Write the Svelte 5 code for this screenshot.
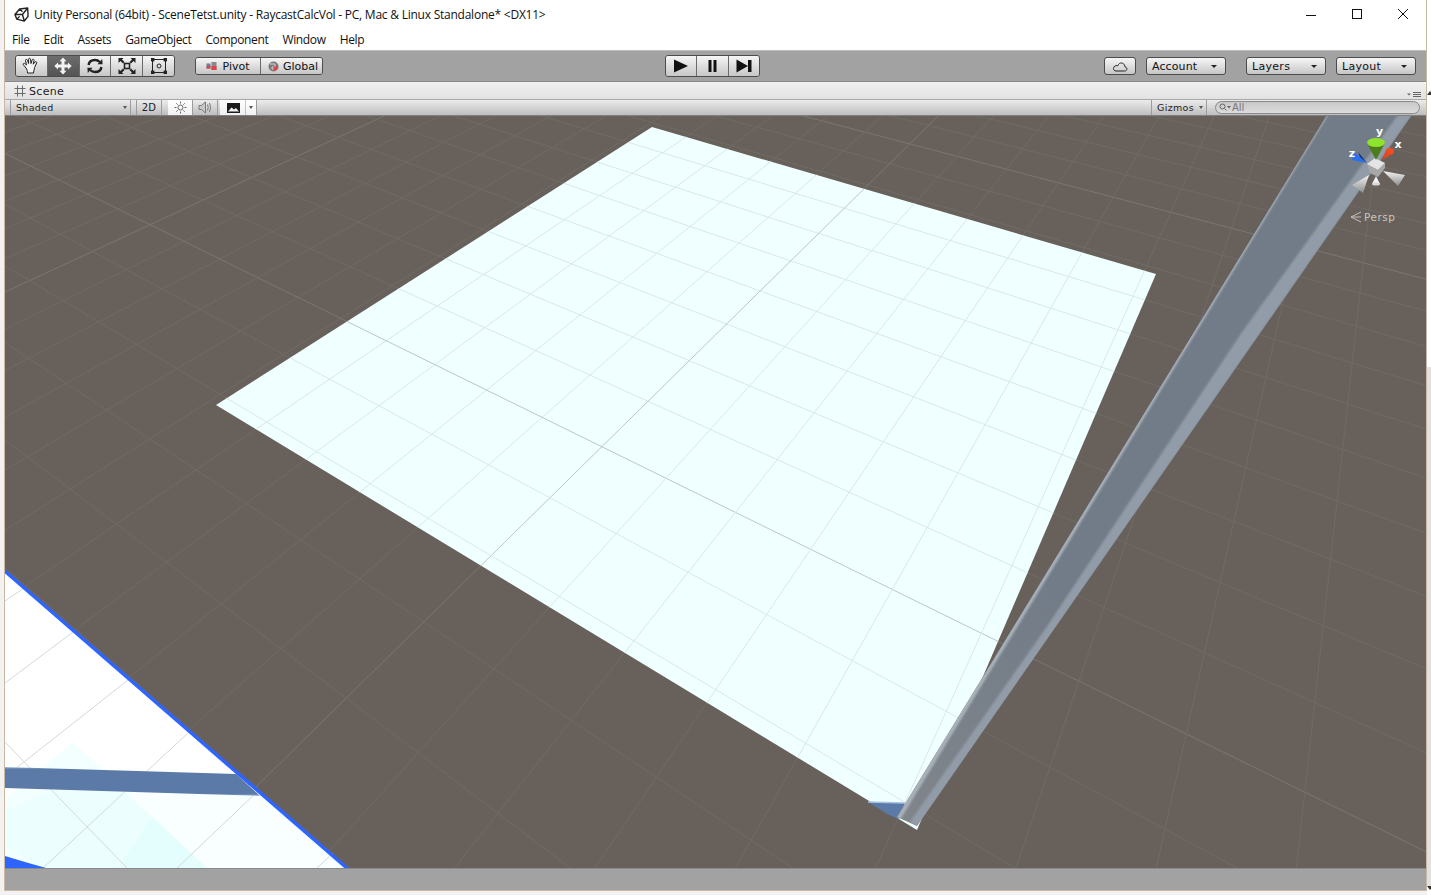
<script>
	// scene plane corners as seen on screen, everything else hangs off this projection
	const A = [652, 127];
	const B = [1156, 274];
	const C = [917, 830];
	const D = [216, 405];

	function det(a, b, c) {
		return (
			a[0] * (b[1] * c[2] - b[2] * c[1]) -
			b[0] * (a[1] * c[2] - a[2] * c[1]) +
			c[0] * (a[1] * b[2] - a[2] * b[1])
		);
	}

	const colB = [B[0], B[1], 1];
	const colD = [D[0], D[1], 1];
	const colC = [-C[0], -C[1], -1];
	const colA = [A[0], A[1], 1];
	const d0 = det(colB, colD, colC);
	const wB = det(colA, colD, colC) / d0;
	const wD = det(colB, colA, colC) / d0;

	function project(u, v) {
		const w = 1 + u * (wB - 1) + v * (wD - 1);
		const x = A[0] + u * (wB * B[0] - A[0]) + v * (wD * D[0] - A[0]);
		const y = A[1] + u * (wB * B[1] - A[1]) + v * (wD * D[1] - A[1]);
		return { x: x / w, y: y / w, w };
	}

	const edgeU = (x) => {
		const t = (x - A[0]) / (B[0] - A[0]);
		return t / (wB - (wB - 1) * t);
	};
	const edgeV = (x) => {
		const t = (A[0] - x) / (A[0] - D[0]);
		return t / (wD - (wD - 1) * t);
	};

	const uMajor = edgeU(864);
	const du = (edgeU(913) - edgeU(685)) / 5;
	const vMajor = edgeV(347);
	const dv = (edgeV(290) - edgeV(628)) / 8;

	function groundSegment(axis, value) {
		let first = null;
		let last = null;
		for (let t = -12; t <= 12; t += 0.02) {
			const p = axis == 'u' ? project(value, t) : project(t, value);
			if (p.w < 0.2) continue;
			if (!first) first = p;
			last = p;
		}
		return first ? { x1: first.x, y1: first.y, x2: last.x, y2: last.y } : null;
	}

	const ground = [];
	const plane = [];
	for (let k = -40; k <= 40; k++) {
		const major = k % 10 == 0;
		const u = uMajor + k * du;
		const v = vMajor + k * dv;
		const su = groundSegment('u', u);
		const sv = groundSegment('v', v);
		if (su) ground.push({ ...su, major });
		if (sv) ground.push({ ...sv, major });
		if (u > 0 && u < 1) {
			const a = project(u, 0);
			const b = project(u, 1);
			plane.push({ x1: a.x, y1: a.y, x2: b.x, y2: b.y, major });
		}
		if (v > 0 && v < 1) {
			const a = project(0, v);
			const b = project(1, v);
			plane.push({ x1: a.x, y1: a.y, x2: b.x, y2: b.y, major });
		}
	}

	const planePoints = [A, B, C, D].map((p) => p.join(',')).join(' ');

	// grid of the second plane in the lower left corner
	const cornerLines = [
		[5, 601, 24, 588],
		[5, 683, 73, 632],
		[128, 680, 5, 777],
		[188, 733, 43, 868],
		[257, 792, 177, 868],
		[333, 853, 317, 868],
		[5, 742, 127, 868]
	];

	const menus = ['File', 'Edit', 'Assets', 'GameObject', 'Component', 'Window', 'Help'];
	const dropdowns = ['Layers', 'Layout'];
</script>

<div class="desktop">
	<div class="window">
		<header class="titlebar">
			<svg class="unity" viewBox="0 0 16 16" width="15" height="15">
				<path d="M1 8 L6 2.2 L14.6 1 L15 10 L11 15 L3 13 Z M1 8 L9 8 M9 8 L14.6 1 M9 8 L11 15 M6 2.2 L9 5 M3 13 L6 10" fill="none" stroke="#222" stroke-width="1.5" stroke-linejoin="round" />
			</svg>
			<span class="title">Unity Personal (64bit) - SceneTetst.unity - RaycastCalcVol - PC, Mac &amp; Linux Standalone* &lt;DX11&gt;</span>
			<div class="winbtns">
				<svg width="12" height="12" viewBox="0 0 12 12"><path d="M1 7.500 H11" stroke="#111" fill="none" /></svg>
				<svg width="12" height="12" viewBox="0 0 12 12"><rect x="1.500" y="1.500" width="9" height="9" stroke="#111" fill="none" /></svg>
				<svg width="12" height="12" viewBox="0 0 12 12"><path d="M1 1 L11 11 M11 1 L1 11" stroke="#111" fill="none" /></svg>
			</div>
		</header>

		<nav class="menubar">
			{#each menus as menu}
				<span>{menu}</span>
			{/each}
		</nav>

		<div class="toolbar">
			<div class="group tools">
				<button class="tool" aria-label="Hand">
					<svg width="20" height="18" viewBox="0 0 20 18"><path d="M5 11 L2.500 8 C1.500 6.800 3 5.600 4.200 6.800 L5.500 8 L4.500 3.500 C4.300 2.200 6 2 6.400 3.200 L7.600 6.500 L7.600 2.200 C7.600 1 9.400 1 9.500 2.200 L10 6.500 L11.200 2.800 C11.600 1.700 13.200 2.200 13 3.400 L12.200 7.200 L14 5 C14.800 4.100 16.200 5 15.600 6 L13.600 10.500 C13 12.500 13 14 12.500 16 L6.500 16 C6.500 14 6 12.500 5 11 Z" fill="#f4f4f4" stroke="#222" stroke-width="1" stroke-linejoin="round" /></svg>
				</button>
				<button class="tool active" aria-label="Move">
					<svg width="20" height="18" viewBox="0 0 20 18"><path d="M10 0.500 L13.500 4.300 H11.500 V7.500 H15 V5.500 L18.700 9 L15 12.500 V10.500 H11.500 V13.700 H13.500 L10 17.500 L6.500 13.700 H8.500 V10.500 H5 V12.500 L1.300 9 L5 5.500 V7.500 H8.500 V4.300 H6.500 Z" fill="#f2f2f2" /></svg>
				</button>
				<button class="tool" aria-label="Rotate">
					<svg width="20" height="18" viewBox="0 0 20 18"><path d="M3.600 8 C4 4.500 7 3 10 3 C12 3 13.600 3.800 14.800 5" fill="none" stroke="#222" stroke-width="2.400" /><path d="M12.500 7.200 L17.600 7.200 L17.200 2 Z" fill="#222" /><path d="M16.400 10 C16 13.500 13 15 10 15 C8 15 6.400 14.200 5.200 13" fill="none" stroke="#222" stroke-width="2.400" /><path d="M7.500 10.800 L2.400 10.800 L2.800 16 Z" fill="#222" /></svg>
				</button>
				<button class="tool" aria-label="Scale">
					<svg width="20" height="18" viewBox="0 0 20 18"><rect x="7.500" y="6.500" width="5" height="5" fill="none" stroke="#222" stroke-width="1.600" /><path d="M1.500 1 H6.500 L5 2.500 L7.500 5 L6 6.500 L3.500 4 L1.500 6 Z M18.500 1 H13.500 L15 2.500 L12.500 5 L14 6.500 L16.500 4 L18.500 6 Z M1.500 17 H6.500 L5 15.500 L7.500 13 L6 11.500 L3.500 14 L1.500 12 Z M18.500 17 H13.500 L15 15.500 L12.500 13 L14 11.500 L16.500 14 L18.500 12 Z" fill="#222" /></svg>
				</button>
				<button class="tool" aria-label="Rect">
					<svg width="20" height="18" viewBox="0 0 20 18"><rect x="3.500" y="2.500" width="13" height="13" fill="none" stroke="#222" /><circle cx="10" cy="9" r="2" fill="none" stroke="#222" /><g fill="#222"><rect x="2" y="1" width="3.400" height="3.400" /><rect x="14.600" y="1" width="3.400" height="3.400" /><rect x="2" y="13.600" width="3.400" height="3.400" /><rect x="14.600" y="13.600" width="3.400" height="3.400" /></g></svg>
				</button>
			</div>

			<div class="group small pivot">
				<button class="pivot-btn">
					<svg width="12" height="10" viewBox="0 0 12 10"><rect x="0.500" y="2.500" width="4" height="5" fill="#6b7ea0" /><rect x="5.500" y="1" width="5" height="8" fill="#8a8a8a" /><rect x="5.500" y="5" width="5" height="4" fill="#d94848" /><rect x="0.500" y="5" width="4" height="2.500" fill="#d94848" /></svg>
					Pivot
				</button>
				<button class="global-btn">
					<svg width="11" height="11" viewBox="0 0 11 11"><circle cx="5.500" cy="5.500" r="5" fill="#7a7a7a" /><path d="M2 3 H7 V6 H4 V8 H8" fill="none" stroke="#d6d6d6" /><path d="M5.500 5.500 H10 A4.500 4.500 0 0 1 5.500 10 Z" fill="#d94848" /></svg>
					Global
				</button>
			</div>

			<div class="group play">
				<button aria-label="Play"><svg width="16" height="14" viewBox="0 0 16 14"><path d="M1 0.500 L15 7 L1 13.500 Z" fill="#111" /></svg></button>
				<button aria-label="Pause"><svg width="16" height="14" viewBox="0 0 16 14"><path d="M4.500 1 H7.500 V13 H4.500 Z M9.500 1 H12.500 V13 H9.500 Z" fill="#111" /></svg></button>
				<button aria-label="Step"><svg width="16" height="14" viewBox="0 0 16 14"><path d="M0.500 0.500 L12 7 L0.500 13.500 Z M12 1 H15.500 V13 H12 Z" fill="#111" /></svg></button>
			</div>

			<button class="flat cloud" aria-label="Cloud">
				<svg width="16" height="11" viewBox="0 0 16 11"><path d="M4 10 H12.500 C15.500 10 15.800 6.500 13 6 C13 3 10 1 7.500 2.500 C6.500 3.300 6 4 5.800 4.800 C3.500 4 1.500 5.500 1.500 7.500 C1.500 9 2.500 10 4 10 Z" fill="none" stroke="#222" /></svg>
			</button>
			<button class="flat drop account"><span>Account</span><i class="caret"></i></button>
			{#each dropdowns as label}
				<button class="flat drop {label.toLowerCase()}"><span>{label}</span><i class="caret"></i></button>
			{/each}
		</div>

		<div class="tabbar">
			<svg width="12" height="12" viewBox="0 0 12 12"><path d="M3.500 0.500 V11.500 M8.500 0.500 V11.500 M0.500 3.500 H11.500 M0.500 8.500 H11.500" stroke="#6a6a6a" fill="none" /></svg>
			<span class="tab-label">Scene</span>
			<svg class="panel-menu" width="15" height="6" viewBox="0 0 15 6"><path d="M0 1.500 H4 L2 3.500 Z" fill="#666" /><path d="M6 0.500 H14 M6 2.500 H14 M6 4.500 H14" stroke="#666" fill="none" /></svg>
		</div>

		<div class="scenebar">
			<div class="seg shaded"><span>Shaded</span><i class="mini"></i></div>
			<div class="seg two-d">2D</div>
			<div class="seg lit sun">
				<svg width="13" height="13" viewBox="0 0 13 13"><circle cx="6.500" cy="6.500" r="2.500" fill="none" stroke="#666" /><path d="M6.500 0.500 V2.500 M6.500 10.500 V12.500 M0.500 6.500 H2.500 M10.500 6.500 H12.500 M2.300 2.300 L3.700 3.700 M9.300 9.300 L10.700 10.700 M10.700 2.300 L9.300 3.700 M3.700 9.300 L2.300 10.700" stroke="#666" fill="none" /></svg>
			</div>
			<div class="seg audio">
				<svg width="15" height="13" viewBox="0 0 15 13"><path d="M1 4.500 H3.500 L7.500 1 V12 L3.500 8.500 H1 Z" fill="#c8c8c8" stroke="#7a7a7a" /><path d="M9.500 3.500 Q11 6.500 9.500 9.500 M11.500 2 Q13.800 6.500 11.500 11" fill="none" stroke="#7a7a7a" /></svg>
			</div>
			<div class="seg lit image">
				<svg width="13" height="10" viewBox="0 0 13 10"><rect width="13" height="10" fill="#1c1c1c" /><path d="M1 8.500 L4.500 4.500 L7 6.500 L9 5 L12 8.500 Z" fill="#f2f2f2" /></svg>
				<span class="image-drop"><i class="mini"></i></span>
			</div>
			<div class="seg gizmos"><span>Gizmos</span><i class="mini"></i></div>
			<div class="search">
				<svg width="13" height="9" viewBox="0 0 13 9"><circle cx="3.500" cy="3.500" r="2.500" fill="none" stroke="#666" /><path d="M5.500 5.500 L7.500 7.500" stroke="#666" /><path d="M8 3 H12 L10 5.500 Z" fill="#666" /></svg>
				<span>All</span>
			</div>
		</div>

		<div class="viewport">
			<svg class="scene" viewBox="5 116 1421 752" width="1421" height="752" role="img" aria-label="Scene view">
				<defs>
					<linearGradient id="coneGrey" x1="0" y1="0" x2="0" y2="1">
						<stop offset="0" stop-color="#f4f4f4" />
						<stop offset="1" stop-color="#8c8c8c" />
					</linearGradient>
					<linearGradient id="bandFade" x1="0" y1="0" x2="0" y2="1">
						<stop offset="0" stop-color="#a9c2de" />
						<stop offset="0.07" stop-color="#5b7aa8" />
						<stop offset="0.93" stop-color="#5b7aa8" />
						<stop offset="1" stop-color="#a9c2de" />
					</linearGradient>
					<linearGradient id="beamBody" gradientUnits="userSpaceOnUse" x1="1060" y1="590" x2="900" y2="820">
						<stop offset="0" stop-color="#727c88" />
						<stop offset="1" stop-color="#80858a" />
					</linearGradient>
					<filter id="soft" x="-5%" y="-5%" width="110%" height="110%">
						<feGaussianBlur stdDeviation="1.200" />
					</filter>
					<clipPath id="beamClip">
						<polygon points="1327,115 1412,115 917,826 897,817" />
					</clipPath>
				</defs>

				<rect x="5" y="116" width="1421" height="752" fill="#68615b" />

				{#each ground as l}
					<line x1={l.x1} y1={l.y1} x2={l.x2} y2={l.y2} stroke={l.major ? '#7a7671' : '#6f6b65'} stroke-width="1" />
				{/each}

				<polygon points={planePoints} fill="#f0ffff" />
				{#each plane as l}
					<line x1={l.x1} y1={l.y1} x2={l.x2} y2={l.y2} stroke={l.major ? '#bcc6c6' : '#dae7e7'} stroke-width="1" />
				{/each}
				<polygon points="868,802 905,803 899,819 889,815" fill="#5b7aa8" />
				<line x1="868" y1="802" x2="905" y2="803" stroke="#a8c4e0" stroke-width="1.500" />

				<!-- beam -->
				<polygon points="1327,115 1412,115 917,826 897,817" fill="url(#beamBody)" />
				<g clip-path="url(#beamClip)">
					<polygon points="1327,110 1331,110 900,820 896,818" fill="#aab2bc" filter="url(#soft)" />
					<polygon points="1414,112 1400,112 1240,335 1048,625 910,822 918,827" fill="#929ca9" filter="url(#soft)" />
				</g>

				<!-- second plane, lower left -->
				<polygon points="5,570 347,868 5,868" fill="#ffffff" />
				<polygon points="73,742 207,868 5,868 5,800" fill="#f3fffe" />
				<polygon points="260,792 347,868 207,868 120,786" fill="#f8fffe" />
				<polygon points="100,770 175,838 145,868 40,868 5,845 5,810" fill="#ecfefe" />
				<polygon points="152,817 207,868 118,868" fill="#e4fdfd" />
				{#each cornerLines as l}
					<line x1={l[0]} y1={l[1]} x2={l[2]} y2={l[3]} stroke="#d2d9d9" stroke-width="1" />
				{/each}
				<polygon points="5,767 236,774 260,796 5,788" fill="url(#bandFade)" />
				<polygon points="5,856 25,862 46,868 5,868" fill="#2e64ff" />
				<line x1="3" y1="569.500" x2="348" y2="869" stroke="#2e64ff" stroke-width="3.500" />

				<!-- orientation gizmo -->
				<polygon points="1369,175 1352,185 1363,193" fill="url(#coneGrey)" />
				<polygon points="1383,171 1405,175 1398,186" fill="url(#coneGrey)" />
				<polygon points="1376,176 1372,184 1380,184" fill="#f0f0f0" />
				<ellipse cx="1376" cy="184" rx="4" ry="1.500" fill="#d8d8d8" />
				<polygon points="1367,164 1378,170 1385,163 1385,168 1378,177 1370,173" fill="#a8a8a8" />
				<polygon points="1375,158 1385,163 1378,170 1367,164" fill="#e4e4e4" />
				<polygon points="1367,143 1385,143 1376,160" fill="#4c7d1a" />
				<ellipse cx="1376" cy="142.500" rx="9" ry="4.500" fill="#8fe32e" />
				<polygon points="1387,148 1394,153 1382,160" fill="#e8461e" />
				<ellipse cx="1390.500" cy="151" rx="3.500" ry="3" fill="#f04e22" />
				<polygon points="1354,152 1367,163 1352,160" fill="#2a6ff0" />
				<polygon points="1358,152 1367,163 1360,157" fill="#0e2a78" />
				<text class="axis" x="1379.500" y="135" text-anchor="middle">y</text>
				<text class="axis" x="1398" y="148" text-anchor="middle">x</text>
				<text class="axis" x="1352" y="157" text-anchor="middle">z</text>
				<path d="M1361 212 L1351 217 L1361 222 M1351 217 H1361" fill="none" stroke="#c4c0bb" />
				<text class="persp" x="1364" y="221">Persp</text>
			</svg>
		</div>

		<div class="status"></div>
	</div>

	<aside class="behind">
		<i class="arrow up"></i>
		<span class="thumb"></span>
		<i class="arrow down"></i>
	</aside>
</div>

<style>
	:global(body) {
		margin: 0;
		background: #f4f2f0;
		overflow: hidden;
	}

	.desktop {
		display: flex;
		height: 895px;
		padding-left: 4px;
		box-sizing: border-box;
	}

	.window {
		box-sizing: border-box;
		width: 1423px;
		height: 891px;
		flex: none;
		border-left: 1px solid #c9b8a4;
		border-right: 1px solid #c9b8a4;
		border-bottom: 1px solid #c9b8a4;
		display: flex;
		flex-direction: column;
		background: #fff;
		overflow: hidden;
		font-family: 'DejaVu Sans', sans-serif;
	}

	.behind {
		flex: 1;
		display: flex;
		flex-direction: column;
		padding-top: 91px;
		padding-bottom: 5px;
		background: #fff;
	}

	.thumb {
		flex: 1;
		margin-top: 272px;
		background: #e2e0de;
	}

	.arrow {
		width: 0;
		height: 0;
		align-self: center;
		border-left: 3px solid transparent;
		border-right: 3px solid transparent;
	}

	.up {
		border-bottom: 4px solid #333;
	}

	.down {
		border-top: 4px solid #333;
	}

	.titlebar {
		flex: 0 0 30px;
		box-sizing: border-box;
		display: flex;
		align-items: center;
		padding: 0 0 2px 9px;
		color: #111;
		font-family: 'Open Sans', sans-serif;
		font-size: 12px;
	}

	.unity {
		margin-right: 5px;
	}

	.title {
		letter-spacing: -0.235px;
	}

	.winbtns {
		margin-left: auto;
		display: flex;
		gap: 34px;
		padding-right: 17px;
	}

	.menubar {
		flex: 0 0 20px;
		box-sizing: border-box;
		display: flex;
		gap: 14px;
		padding: 0 0 2px 7px;
		align-items: center;
		font-family: 'Open Sans', sans-serif;
		font-size: 12px;
		letter-spacing: -0.35px;
		color: #111;
	}

	.toolbar {
		flex: 0 0 32px;
		box-sizing: border-box;
		display: flex;
		align-items: center;
		padding-left: 10px;
		background: #a2a2a2;
		border-top: 1px solid #bdbdbd;
		border-bottom: 1px solid #8a8a8a;
		font-size: 11px;
		color: #111;
	}

	button {
		margin: 0;
		padding: 0;
		font: inherit;
		color: inherit;
		background: linear-gradient(#f6f6f6, #c6c6c6);
		border: 0;
		display: flex;
		align-items: center;
		justify-content: center;
	}

	.group {
		display: flex;
		border: 1px solid #4c4c4c;
		border-radius: 3px;
		overflow: hidden;
		box-sizing: border-box;
	}

	.group button + button {
		border-left: 1px solid #6a6a6a;
	}

	.tools {
		height: 22px;
		width: 160px;
	}

	.tool {
		flex: 1;
	}

	.tool.active {
		background: linear-gradient(#6d6d6d, #545454);
	}

	.pivot {
		height: 18px;
		width: 128px;
		margin-left: 20px;
		letter-spacing: 0.5px;
	}

	.pivot-btn {
		width: 64px;
		gap: 4px;
	}

	.global-btn {
		flex: 1;
		gap: 4px;
		padding-left: 3px;
	}

	.play {
		height: 22px;
		width: 95px;
		margin-left: 342px;
	}

	.play button {
		flex: 1;
	}

	.flat {
		box-sizing: border-box;
		height: 18px;
		border: 1px solid #4c4c4c;
		border-radius: 3px;
	}

	.cloud {
		width: 32px;
		margin-left: 344px;
	}

	.drop {
		width: 80px;
		justify-content: space-between;
		padding: 0 8px 0 5px;
		letter-spacing: 0.3px;
	}

	.account {
		margin-left: 10px;
		letter-spacing: 0.1px;
	}

	.layers {
		margin-left: 20px;
	}

	.layout {
		margin-left: 10px;
	}

	.caret {
		width: 0;
		height: 0;
		border-left: 3px solid transparent;
		border-right: 3px solid transparent;
		border-top: 3px solid #222;
	}

	.tabbar {
		flex: 0 0 18px;
		box-sizing: border-box;
		display: flex;
		align-items: center;
		gap: 3px;
		padding: 1px 0 0 9px;
		background: linear-gradient(#f0f0f0, #e2e2e2);
		border-bottom: 1px solid #a8a8a8;
		border-top-right-radius: 3px;
		font-size: 11px;
		letter-spacing: 0.3px;
		color: #222;
	}

	.panel-menu {
		margin-left: auto;
		margin-top: 8px;
		margin-right: 4px;
	}

	.scenebar {
		flex: 0 0 16px;
		box-sizing: border-box;
		display: flex;
		align-items: stretch;
		background: linear-gradient(#ececec, #bebebe);
		border-bottom: 1px solid #808080;
		font-size: 9.500px;
		letter-spacing: 0.3px;
		color: #222;
	}

	.seg {
		box-sizing: border-box;
		display: flex;
		align-items: center;
		justify-content: center;
		border-right: 1px solid #9c9c9c;
	}

	.shaded {
		width: 121px;
		margin-left: 5px;
		justify-content: space-between;
		padding: 0 3px 0 5px;
		border-left: 1px solid #9c9c9c;
	}

	.two-d {
		width: 26px;
		margin-left: 5px;
		border-left: 1px solid #9c9c9c;
		font-size: 10px;
	}

	.sun {
		width: 25px;
		margin-left: 6px;
	}

	.lit {
		background: linear-gradient(#ffffff, #f0f0f0);
	}

	.audio {
		width: 25px;
	}

	.image {
		width: 37px;
		margin-left: 2px;
		justify-content: flex-start;
		padding-left: 7px;
	}

	.image-drop {
		margin-left: 5px;
		height: 100%;
		flex: 1;
		display: flex;
		align-items: center;
		justify-content: center;
		border-left: 1px solid #c4c4c4;
	}

	.mini {
		width: 0;
		height: 0;
		border-left: 2px solid transparent;
		border-right: 2px solid transparent;
		border-top: 3px solid #555;
	}

	.gizmos {
		width: 56px;
		margin-left: auto;
		gap: 5px;
		padding-left: 2px;
		border-left: 1px solid #9c9c9c;
	}

	.search {
		box-sizing: border-box;
		width: 205px;
		height: 13px;
		margin: 0 6px 0 8px;
		align-self: center;
		display: flex;
		align-items: center;
		padding-left: 3px;
		background: linear-gradient(#c8c8c8, #dcdcdc);
		border: 1px solid #8a8a8a;
		border-radius: 7px;
		font-size: 10px;
		letter-spacing: 0;
		color: #777;
	}

	.viewport {
		flex: 0 0 752px;
		position: relative;
		overflow: hidden;
	}

	.scene {
		display: block;
	}

	.axis {
		font-family: 'DejaVu Sans', sans-serif;
		font-size: 11px;
		font-weight: 700;
		fill: #fff;
	}

	.persp {
		font-family: 'DejaVu Sans', sans-serif;
		font-size: 10.500px;
		letter-spacing: 0.5px;
		fill: #c9c5c0;
	}

	.status {
		flex: 1;
		background: #a2a2a2;
		border-top: 1px solid #8a8a8a;
	}
</style>
